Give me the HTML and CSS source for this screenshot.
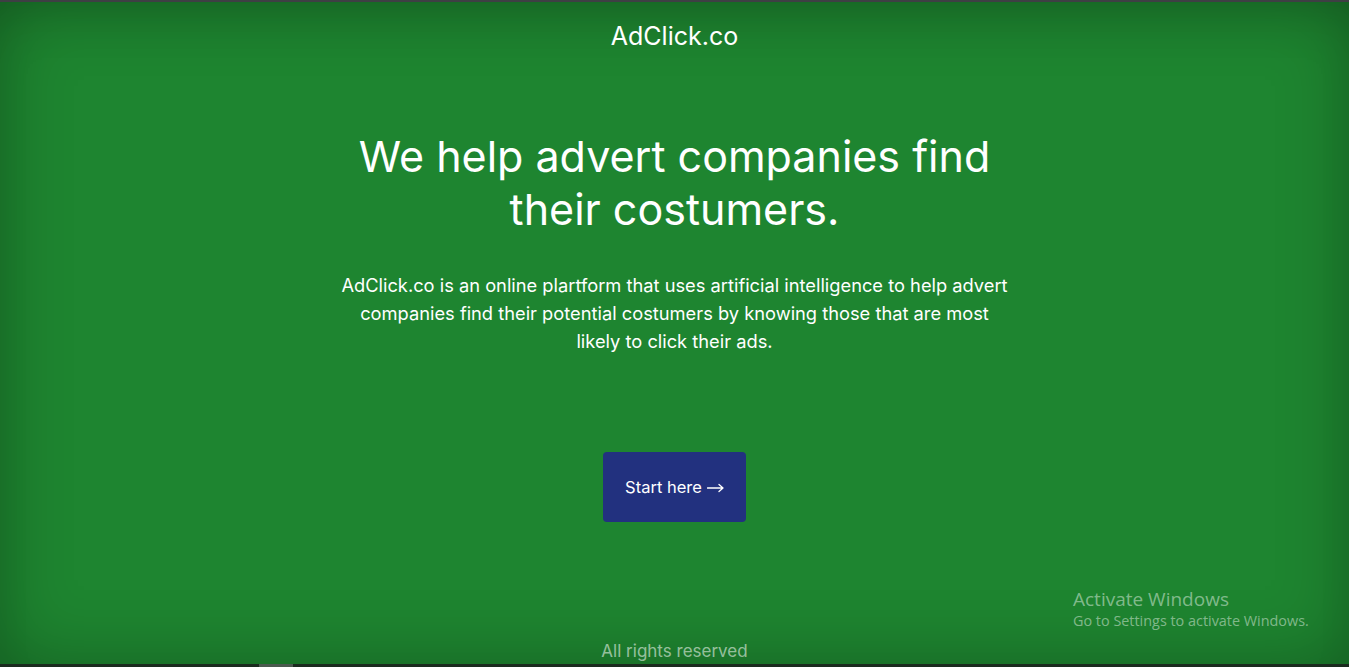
FILE: index.html
```html
<!DOCTYPE html>
<html lang="en">
<head>
<meta charset="utf-8">
<title>AdClick.co</title>
<link rel="stylesheet" href="styles.css">
</head>
<body>
<div class="page">
  <header class="header">
    <div class="logo">AdClick.co</div>
  </header>
  <main class="hero">
    <h1 class="title">We help advert companies find<br>their costumers.</h1>
    <p class="lead">AdClick.co is an online plartform that uses artificial intelligence to help advert companies find their potential costumers by knowing those that are most likely to click their ads.</p>
    <a class="cta" href="#">Start here <svg class="arrow" width="17" height="10" viewBox="0 0 17 10" aria-hidden="true"><path d="M0.5 5H16M12 1.5L16 5L12 8.5" fill="none" stroke="#fff" stroke-width="1.3" stroke-linecap="round" stroke-linejoin="round"/></svg></a>
  </main>
  <footer class="footer">All rights reserved</footer>
  <div class="activate">
    <div class="activate-title">Activate Windows</div>
    <div class="activate-sub">Go to Settings to activate Windows.</div>
  </div>
</div>
<div class="taskbar"><span class="taskbar-mark"></span></div>
</body>
</html>
```

FILE: styles.css
```css
* { box-sizing: border-box; }
html, body { margin: 0; padding: 0; }
body {
  width: 1349px;
  height: 667px;
  overflow: hidden;
  background: #1e8530;
  font-family: Inter, "Liberation Sans", sans-serif;
  color: #fff;
  border-top: 2px solid #3e3f44;
}
.page {
  position: relative;
  height: 662px;
  display: flex;
  flex-direction: column;
  align-items: center;
  background: #1e8530;
  box-shadow: inset 0 0 70px rgba(0, 0, 0, 0.28), inset 0 30px 60px -30px rgba(0,0,0,0.15);
}
.header { padding-top: 18px; }
.logo {
  font-size: 25px;
  line-height: 32px;
  font-weight: 400;
}
.hero {
  display: flex;
  flex-direction: column;
  align-items: center;
  text-align: center;
}
.title {
  margin: 78px 0 0;
  font-size: 43px;
  line-height: 53px;
  font-weight: 400;
}
.lead {
  margin: 35px 0 0;
  width: 668px;
  font-size: 18.3px;
  line-height: 28px;
}
.cta {
  margin-top: 97px;
  display: flex;
  align-items: center;
  justify-content: center;
  gap: 5px;
  width: 143px;
  height: 70px;
  background: #22317f;
  border-radius: 4px;
  color: #fff;
  text-decoration: none;
  font-size: 16.5px;
}
.arrow { display: block; margin-top: 1px; }
.footer {
  margin-top: auto;
  line-height: 24px;
  height: 25px;
  font-size: 17px;
  color: rgba(255, 255, 255, 0.55);
}
.activate {
  position: absolute;
  left: 1073px;
  top: 585px;
  font-family: "Open Sans", "Noto Sans", sans-serif;
  color: rgba(255, 255, 255, 0.45);
}
.activate-title { font-size: 19px; line-height: 24px; }
.activate-sub { font-size: 14.4px; line-height: 20px; }
.taskbar {
  height: 3px;
  background: #1b2b1f;
  position: relative;
}
.taskbar-mark {
  position: absolute;
  left: 259px;
  top: 0;
  width: 34px;
  height: 3px;
  background: #4b5a4f;
}
```
